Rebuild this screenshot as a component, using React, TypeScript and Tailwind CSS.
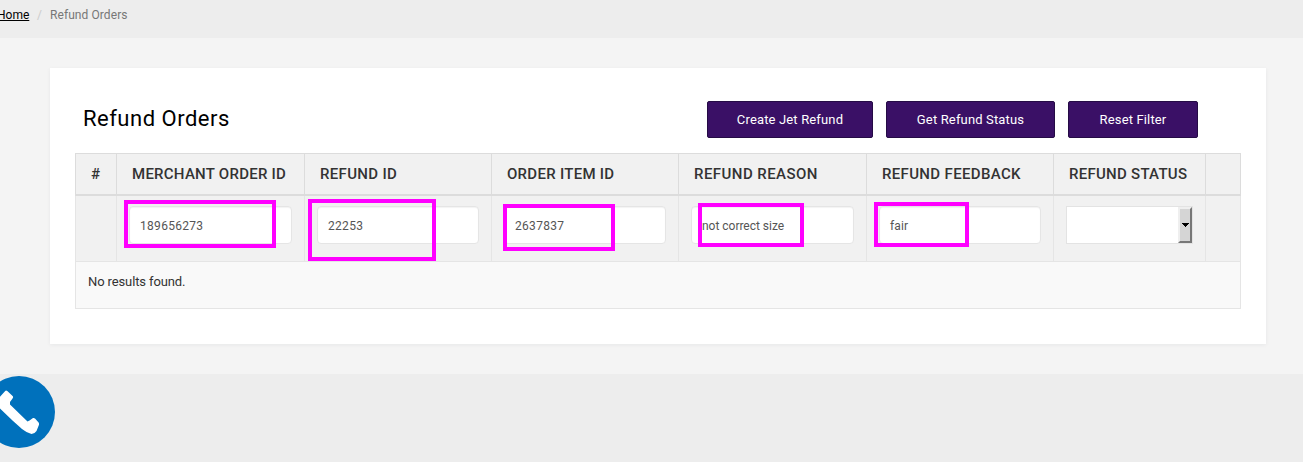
import React from "react";

const columns = [
  { title: "#", spacing: "tracking-[0.2px]", value: null, valueSpacing: "" },
  { title: "Merchant Order ID", spacing: "tracking-[0.26px]", value: "189656273", valueSpacing: "tracking-[0.3px]" },
  { title: "Refund ID", spacing: "tracking-[0.32px]", value: "22253", valueSpacing: "tracking-[0.3px]" },
  { title: "Order Item ID", spacing: "tracking-[0.28px]", value: "2637837", valueSpacing: "tracking-[0.3px]" },
  { title: "Refund Reason", spacing: "tracking-[0.45px]", value: "not correct size", valueSpacing: "tracking-[-0.02px]" },
  { title: "Refund Feedback", spacing: "tracking-[0.34px]", value: "fair", valueSpacing: "tracking-[0.1px]" },
];

const grid = "grid grid-cols-[41px_188px_187px_187px_188px_187px_152px_35px]";

const highlights = [
  "left-[124px] top-[200px] w-[152px] h-[48px]",
  "left-[308px] top-[199px] w-[128px] h-[62px]",
  "left-[503px] top-[204px] w-[112px] h-[47px]",
  "left-[698px] top-[203px] w-[106px] h-[44px]",
  "left-[874px] top-[202px] w-[95px] h-[45px]",
];

function ActionButton({ label, width }: { label: string; width: string }) {
  return (
    <button
      className={`${width} h-[37px] rounded-[2px] border border-[#250b45] bg-[#3a1066] text-center text-[13px] leading-[35px] tracking-[0.15px] whitespace-nowrap text-white`}
    >
      {label}
    </button>
  );
}

function StatusSelect() {
  return (
    <div className="flex h-[38px] w-[127px] border border-[#e3e3e3] bg-white">
      <div className="flex-1" />
      <div className="flex h-[36px] w-[14px] items-center justify-center border-2 border-t-[#efefef] border-r-[#777] border-b-[#777] border-l-[#efefef] bg-[#d5d5d5]">
        <svg width="7" height="4" viewBox="0 0 7 4" shapeRendering="crispEdges" className="shrink-0">
          <path d="M0 0h7v1H6v1H5v1H4v1H3V3H2V2H1V1H0z" fill="#000" />
        </svg>
      </div>
    </div>
  );
}

export default function App() {
  return (
    <div className="relative flex h-[462px] w-[1303px] flex-col overflow-hidden bg-[#ededed] font-['Roboto',sans-serif] text-[#333]">
      <nav className="flex h-[38px] shrink-0 bg-[#ededed] text-[12px] leading-[30px] whitespace-nowrap">
        <a className="-ml-[3px] w-[40px] text-black underline">Home</a>
        <span className="w-[13px] text-[#ccc]">/</span>
        <span className="tracking-[0.08px] text-[#777]">Refund Orders</span>
      </nav>

      <main className="h-[336px] shrink-0 bg-[#f4f4f4] px-[50px] pt-[30px]">
        <section className="h-[276px] w-[1216px] bg-white px-[25px] pt-[33px] shadow-[0_1px_4px_rgba(0,30,50,0.06)]">
          <header className="flex h-[52px] items-start pl-[8px]">
            <h1 className="w-[624px] text-[22px] leading-[36px] tracking-[0.5px] text-black">Refund Orders</h1>
            <div className="flex gap-[13px]">
              <ActionButton label="Create Jet Refund" width="w-[166px]" />
              <ActionButton label="Get Refund Status" width="w-[169px]" />
              <ActionButton label="Reset Filter" width="w-[130px]" />
            </div>
          </header>

          <div className="w-[1166px]">
            <div className={`${grid} h-[43px] border-t border-b-2 border-l border-[#dcdcdc] bg-[#f1f1f1]`}>
              {columns.map((c) => (
                <div
                  key={c.title}
                  className={`${c.spacing} border-r border-[#dcdcdc] pl-[15px] text-[15px] leading-[40px] font-medium whitespace-nowrap uppercase`}
                >
                  {c.title}
                </div>
              ))}
              <div className="border-r border-[#dcdcdc] pl-[15px] text-[15px] leading-[40px] font-medium tracking-[0.27px] whitespace-nowrap uppercase">
                Refund Status
              </div>
              <div className="border-r border-[#dcdcdc]" />
            </div>

            <div className={`${grid} h-[66px] border-b border-l border-[#e5e5e5] bg-[#f1f1f1]`}>
              {columns.map((c) => (
                <div key={c.title} className="border-r border-[#e5e5e5] px-[12px] pt-[10px]">
                  {c.value && (
                    <div
                      className={`${c.valueSpacing} h-[38px] rounded-[4px] border border-[#e5e5e5] bg-white pl-[10px] text-[12px] leading-[38px] whitespace-nowrap text-[#555] shadow-[inset_0_1px_1px_rgba(0,0,0,0.05)]`}
                    >
                      {c.value}
                    </div>
                  )}
                </div>
              ))}
              <div className="border-r border-[#e5e5e5] pt-[10px] pl-[12px]">
                <StatusSelect />
              </div>
              <div className="border-r border-[#e5e5e5]" />
            </div>

            <div className="h-[47px] border-r border-b border-l border-[#e5e5e5] bg-[#f9f9f9] pl-[12px] text-[13px] leading-[40px] tracking-[-0.12px]">
              No results found.
            </div>
          </div>
        </section>
      </main>

      {highlights.map((box) => (
        <div key={box} className={`absolute border-4 border-[#ff00ff] ${box}`} />
      ))}

      <svg className="absolute top-[374px] left-0" width="57" height="76" viewBox="0 374 57 76">
        <circle cx="19" cy="412" r="36" fill="#0071bc" />
        <path
          d="M-3 400L5.2 391Q6 390 7.3 391L12.6 396Q13.6 397 12.7 398.2L10 402V404.5L27.5 421.5L29.5 420.5L33 418Q34 417.6 35 418.5L38.6 422.5Q39.5 424 38.7 425.5L36.5 431Q34.5 434 31.5 434Q27 433 22 429L12.5 420.5L0 408.5L-3 404z"
          fill="#fff"
        />
      </svg>
    </div>
  );
}
